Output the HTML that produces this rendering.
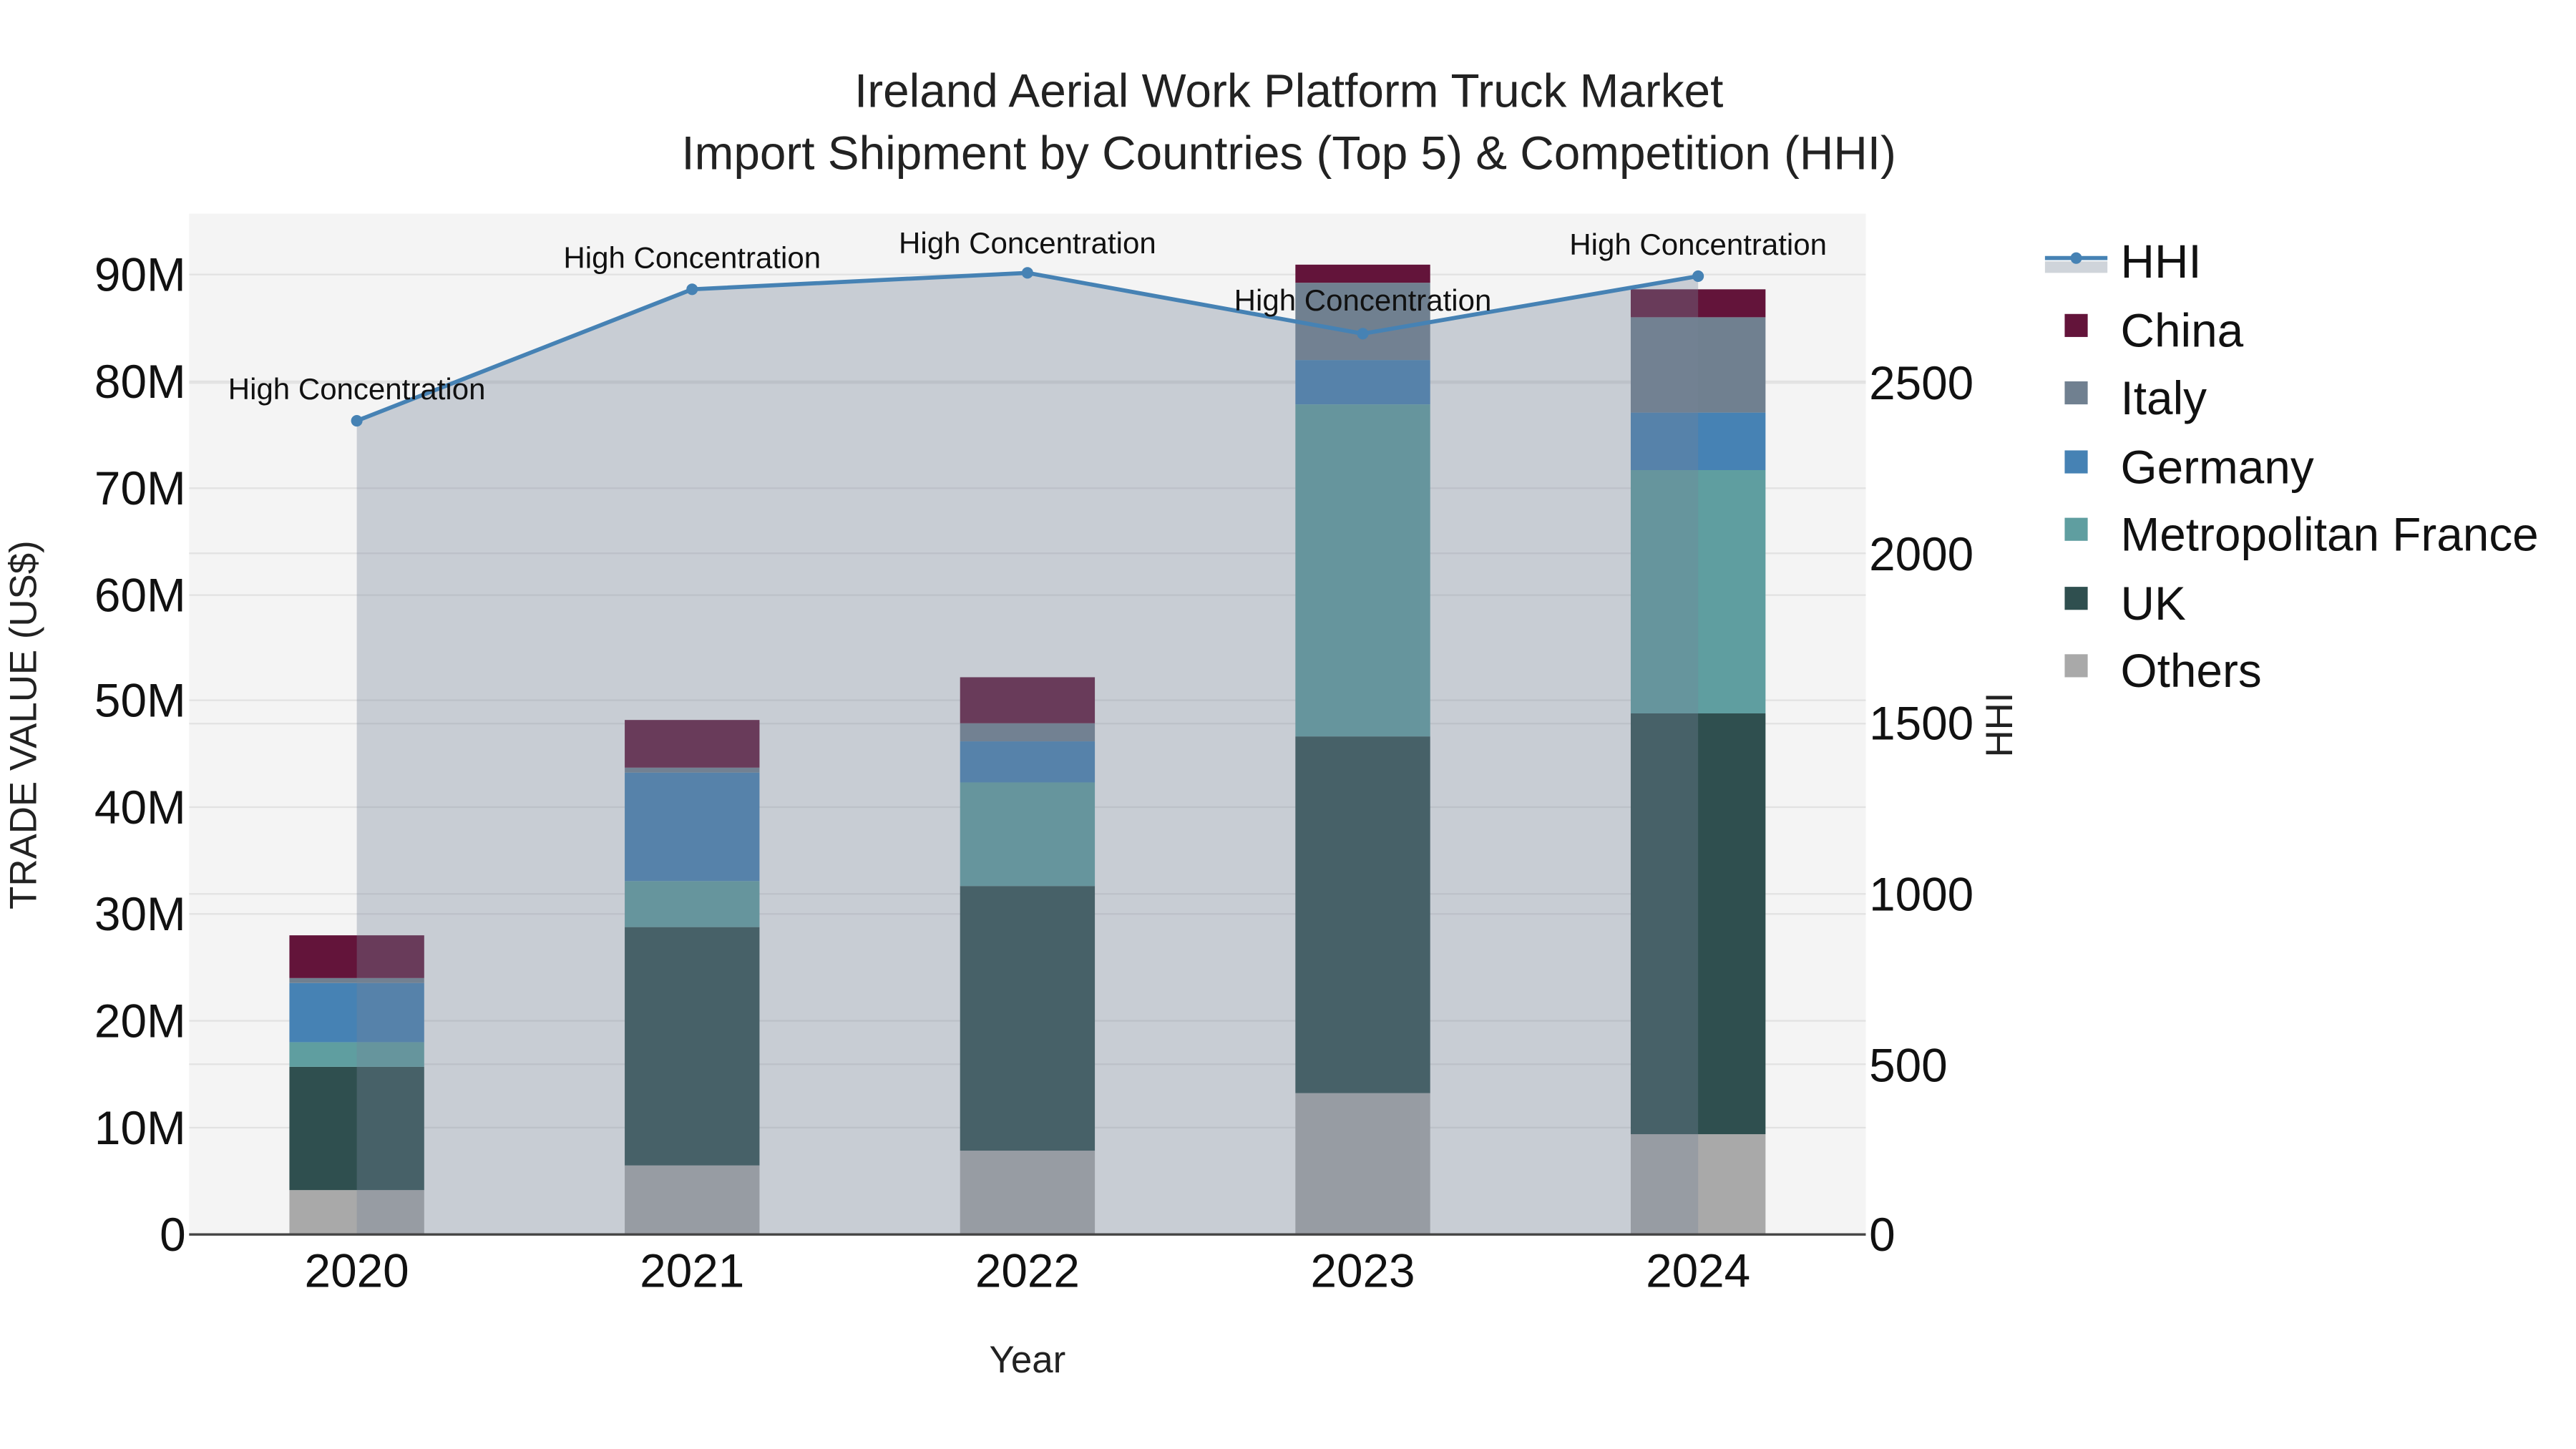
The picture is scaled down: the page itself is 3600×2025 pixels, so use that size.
<!DOCTYPE html>
<html><head><meta charset="utf-8"><style>
html,body{margin:0;padding:0;background:#fff;}
svg{display:block;font-family:"Liberation Sans",sans-serif;}
</style></head><body>
<svg width="3600" height="2025" viewBox="0 0 1567 881.5" xmlns="http://www.w3.org/2000/svg">
<rect x="0" y="0" width="1567" height="881.5" fill="#fff"/>
<rect x="115" y="130" width="1020" height="621" fill="#f4f4f4"/>
<g stroke="#e2e2e2" stroke-width="1">
<line x1="115" x2="1135" y1="686" y2="686"/><line x1="115" x2="1135" y1="621" y2="621"/>
<line x1="115" x2="1135" y1="556" y2="556"/><line x1="115" x2="1135" y1="491" y2="491"/>
<line x1="115" x2="1135" y1="426" y2="426"/><line x1="115" x2="1135" y1="362" y2="362"/>
<line x1="115" x2="1135" y1="297" y2="297"/><line x1="115" x2="1135" y1="232" y2="232"/>
<line x1="115" x2="1135" y1="167" y2="167"/>
<line x1="115" x2="1135" y1="647.4" y2="647.4"/><line x1="115" x2="1135" y1="543.8" y2="543.8"/>
<line x1="115" x2="1135" y1="440.2" y2="440.2"/><line x1="115" x2="1135" y1="336.6" y2="336.6"/>
<line x1="115" x2="1135" y1="233" y2="233"/>
</g>
<g>
<rect x="176" y="724" width="82" height="27" fill="#a9a9a9"/>
<rect x="176" y="649" width="82" height="75" fill="#2f4f4f"/>
<rect x="176" y="634" width="82" height="15" fill="#5f9ea0"/>
<rect x="176" y="598" width="82" height="36" fill="#4682b4"/>
<rect x="176" y="595" width="82" height="3" fill="#708090"/>
<rect x="176" y="569" width="82" height="26" fill="#63143a"/>

<rect x="380" y="709" width="82" height="42" fill="#a9a9a9"/>
<rect x="380" y="564" width="82" height="145" fill="#2f4f4f"/>
<rect x="380" y="536" width="82" height="28" fill="#5f9ea0"/>
<rect x="380" y="470" width="82" height="66" fill="#4682b4"/>
<rect x="380" y="467" width="82" height="3" fill="#708090"/>
<rect x="380" y="438" width="82" height="29" fill="#63143a"/>

<rect x="584" y="700" width="82" height="51" fill="#a9a9a9"/>
<rect x="584" y="539" width="82" height="161" fill="#2f4f4f"/>
<rect x="584" y="476" width="82" height="63" fill="#5f9ea0"/>
<rect x="584" y="451" width="82" height="25" fill="#4682b4"/>
<rect x="584" y="440" width="82" height="11" fill="#708090"/>
<rect x="584" y="412" width="82" height="28" fill="#63143a"/>

<rect x="788" y="665" width="82" height="86" fill="#a9a9a9"/>
<rect x="788" y="448" width="82" height="217" fill="#2f4f4f"/>
<rect x="788" y="246" width="82" height="202" fill="#5f9ea0"/>
<rect x="788" y="219" width="82" height="27" fill="#4682b4"/>
<rect x="788" y="172" width="82" height="47" fill="#708090"/>
<rect x="788" y="161" width="82" height="11" fill="#63143a"/>

<rect x="992" y="690" width="82" height="61" fill="#a9a9a9"/>
<rect x="992" y="434" width="82" height="256" fill="#2f4f4f"/>
<rect x="992" y="286" width="82" height="148" fill="#5f9ea0"/>
<rect x="992" y="251" width="82" height="35" fill="#4682b4"/>
<rect x="992" y="193" width="82" height="58" fill="#708090"/>
<rect x="992" y="176" width="82" height="17" fill="#63143a"/>
</g>
<polygon points="217,751 217,256 421,176 625,166 829,203 1033,168 1033,751" fill="rgba(118,133,153,0.35)"/>
<line x1="115" x2="1135" y1="751" y2="751" stroke="#444" stroke-width="1.5"/>
<polyline points="217,256 421,176 625,166 829,203 1033,168" fill="none" stroke="#4682b4" stroke-width="2.5"/>
<g fill="#4682b4">
<circle cx="217" cy="256" r="3.5"/><circle cx="421" cy="176" r="3.5"/><circle cx="625" cy="166" r="3.5"/><circle cx="829" cy="203" r="3.5"/><circle cx="1033" cy="168" r="3.5"/>
</g>
<g font-size="18.3" fill="#111" text-anchor="middle">
<text x="217" y="243">High Concentration</text>
<text x="421" y="163">High Concentration</text>
<text x="625" y="154">High Concentration</text>
<text x="829" y="189">High Concentration</text>
<text x="1033" y="155">High Concentration</text>
</g>
<g font-size="28.6" fill="#222" text-anchor="middle">
<text x="784" y="65">Ireland Aerial Work Platform Truck Market</text>
<text x="784" y="103">Import Shipment by Countries (Top 5) &amp; Competition (HHI)</text>
</g>
<g font-size="28.6" fill="#111" text-anchor="end">
<text x="113" y="761">0</text><text x="113" y="696">10M</text><text x="113" y="631">20M</text>
<text x="113" y="566">30M</text><text x="113" y="501">40M</text><text x="113" y="436">50M</text>
<text x="113" y="372">60M</text><text x="113" y="307">70M</text><text x="113" y="242">80M</text>
<text x="113" y="177">90M</text>
</g>
<g font-size="28.6" fill="#111" text-anchor="start">
<text x="1137" y="761">0</text><text x="1137" y="658">500</text><text x="1137" y="554">1000</text>
<text x="1137" y="450">1500</text><text x="1137" y="347">2000</text><text x="1137" y="243">2500</text>
</g>
<g font-size="28.6" fill="#111" text-anchor="middle">
<text x="217" y="783">2020</text><text x="421" y="783">2021</text><text x="625" y="783">2022</text>
<text x="829" y="783">2023</text><text x="1033" y="783">2024</text>
</g>
<text x="625" y="835" font-size="23" fill="#222" text-anchor="middle">Year</text>
<text transform="translate(22,441) rotate(-90)" font-size="23" fill="#222" text-anchor="middle">TRADE VALUE (US$)</text>
<text transform="translate(1224,441) rotate(-90)" font-size="23" fill="#222" text-anchor="middle">HHI</text>
<rect x="1244" y="159" width="38" height="7" fill="#cfd4da"/>
<line x1="1244" x2="1282" y1="157" y2="157" stroke="#4682b4" stroke-width="2.5"/>
<circle cx="1263" cy="157" r="3.5" fill="#4682b4"/>
<rect x="1256" y="191" width="14" height="14" fill="#63143a"/>
<rect x="1256" y="232" width="14" height="14" fill="#708090"/>
<rect x="1256" y="274" width="14" height="14" fill="#4682b4"/>
<rect x="1256" y="315" width="14" height="14" fill="#5f9ea0"/>
<rect x="1256" y="357" width="14" height="14" fill="#2f4f4f"/>
<rect x="1256" y="398" width="14" height="14" fill="#a9a9a9"/>
<g font-size="28.6" fill="#111">
<text x="1290" y="169">HHI</text><text x="1290" y="211">China</text><text x="1290" y="252">Italy</text>
<text x="1290" y="294">Germany</text><text x="1290" y="335">Metropolitan France</text>
<text x="1290" y="377">UK</text><text x="1290" y="418">Others</text>
</g>
</svg>
</body></html>
